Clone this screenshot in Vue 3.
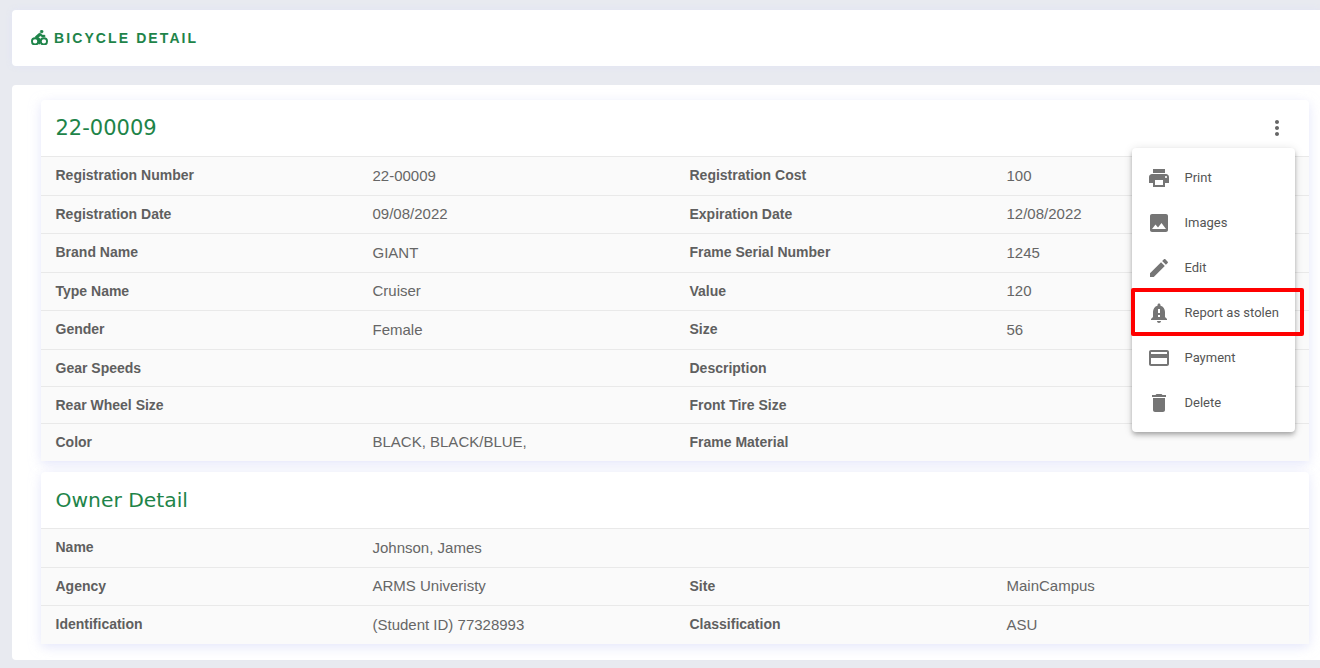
<script setup>
const bikeRows = [
  [['Registration Number', '22-00009'], ['Registration Cost', '100']],
  [['Registration Date', '09/08/2022'], ['Expiration Date', '12/08/2022']],
  [['Brand Name', 'GIANT'], ['Frame Serial Number', '1245']],
  [['Type Name', 'Cruiser'], ['Value', '120']],
  [['Gender', 'Female'], ['Size', '56']],
  [['Gear Speeds', ''], ['Description', '']],
  [['Rear Wheel Size', ''], ['Front Tire Size', '']],
  [['Color', 'BLACK, BLACK/BLUE,'], ['Frame Material', '']],
]
const ownerRows = [
  [['Name', 'Johnson, James'], ['', '']],
  [['Agency', 'ARMS Univeristy'], ['Site', 'MainCampus']],
  [['Identification', '(Student ID) 77328993'], ['Classification', 'ASU']],
]
const menu = [
  { label: 'Print', d: 'M19 8H5c-1.66 0-3 1.34-3 3v6h4v4h12v-4h4v-6c0-1.66-1.34-3-3-3zm-3 11H8v-5h8v5zm3-7c-.55 0-1-.45-1-1s.45-1 1-1 1 .45 1 1-.45 1-1 1zm-1-9H6v4h12V3z' },
  { label: 'Images', d: 'M21 19V5c0-1.1-.9-2-2-2H5c-1.1 0-2 .9-2 2v14c0 1.1.9 2 2 2h14c1.1 0 2-.9 2-2zM8.5 13.5l2.5 3.01L14.5 12l4.5 6H5l3.5-4.5z' },
  { label: 'Edit', d: 'M3 17.25V21h3.75L17.81 9.94l-3.75-3.75L3 17.25zM20.71 7.04c.39-.39.39-1.02 0-1.41l-2.34-2.34c-.39-.39-1.02-.39-1.41 0l-1.83 1.83 3.75 3.75 1.83-1.83z' },
  { label: 'Report as stolen', d: 'M18 16v-5c0-3.07-1.64-5.64-4.5-6.32V4c0-.83-.67-1.5-1.5-1.5s-1.5.67-1.5 1.5v.68C7.63 5.36 6 7.93 6 11v5l-2 2v1h16v-1l-2-2zm-5 0h-2v-2h2v2zm0-4h-2V8h2v4zm-1 10c1.1 0 2-.9 2-2h-4c0 1.1.9 2 2 2z' },
  { label: 'Payment', d: 'M20 4H4c-1.11 0-1.99.89-1.99 2L2 18c0 1.11.89 2 2 2h16c1.11 0 2-.89 2-2V6c0-1.11-.89-2-2-2zm0 14H4v-6h16v6zm0-10H4V6h16v2z' },
  { label: 'Delete', d: 'M6 19c0 1.1.9 2 2 2h8c1.1 0 2-.9 2-2V7H6v12zM19 4h-3.5l-1-1h-5l-1 1H5v2h14V4z' },
]
</script>

<template>
  <div class="page">
    <header class="bar">
      <svg class="bike" viewBox="0 0 540 490" aria-hidden="true">
        <path class="rider" transform="translate(-60 0)" d="M400 96a48 48 0 1 0-48-48 48 48 0 0 0 48 48zm-4 121a31.9 31.9 0 0 0 20 7h64a32 32 0 0 0 0-64h-52.78L356 103a31.94 31.94 0 0 0-40.81.68l-112 96a32 32 0 0 0 3.08 50.92L288 305.12V416a32 32 0 0 0 64 0V288a32 32 0 0 0-14.25-26.62l-41.36-27.57 58.25-49.92z" />
        <circle class="wheel" cx="130" cy="360" r="100" />
        <circle class="wheel" cx="410" cy="360" r="100" />
      </svg>
      <span class="bar-title">BICYCLE DETAIL</span>
    </header>

    <main class="panel">
      <section class="card">
        <div class="card-head">
          <h2 class="num">22-00009</h2>
          <svg class="more" viewBox="0 0 24 24" aria-hidden="true">
            <path d="M12 8c1.1 0 2-.9 2-2s-.9-2-2-2-2 .9-2 2 .9 2 2 2zm0 2c-1.1 0-2 .9-2 2s.9 2 2 2 2-.9 2-2-.9-2-2-2zm0 6c-1.1 0-2 .9-2 2s.9 2 2 2 2-.9 2-2-.9-2-2-2z" />
          </svg>
        </div>
        <div v-for="(row, i) in bikeRows" :key="i" class="row">
          <template v-for="(cell, j) in row" :key="j">
            <div class="label">{{ cell[0] }}</div>
            <div class="value">{{ cell[1] }}</div>
          </template>
        </div>

        <div class="menu">
          <div v-for="item in menu" :key="item.label" class="menu-item">
            <svg class="menu-icon" viewBox="0 0 24 24" aria-hidden="true"><path :d="item.d" /></svg>
            <span>{{ item.label }}</span>
          </div>
          <div class="highlight"></div>
        </div>
      </section>

      <section class="card">
        <div class="card-head">
          <h2>Owner Detail</h2>
        </div>
        <div v-for="(row, i) in ownerRows" :key="i" class="row">
          <template v-for="(cell, j) in row" :key="j">
            <div class="label">{{ cell[0] }}</div>
            <div class="value">{{ cell[1] }}</div>
          </template>
        </div>
      </section>
    </main>
  </div>
</template>

<style scoped>
.page {
  height: 668px;
  overflow: hidden;
  box-sizing: border-box;
  padding: 10px 0 0 12px;
  font-family: "Liberation Sans", Arial, sans-serif;
}
.bar {
  height: 56px;
  background: #fff;
  border-radius: 4px 0 0 4px;
  box-shadow: 0 0 6px rgba(225, 228, 245, 0.9);
  display: flex;
  align-items: center;
  padding-left: 19px;
  gap: 6px;
}
.bike {
  width: 17px;
  height: 15.5px;
  margin-top: -1px;
}
.rider {
  fill: #1e8449;
  stroke: #1e8449;
  stroke-width: 14;
}
.wheel {
  fill: none;
  stroke: #1e8449;
  stroke-width: 60;
}
.bar-title {
  color: #1e8449;
  font-size: 14px;
  font-weight: 700;
  letter-spacing: 2.1px;
  margin-top: -1px;
}
.panel {
  margin-top: 19px;
  height: 575px;
  box-sizing: border-box;
  background: #fff;
  border-radius: 4px 0 0 4px;
  padding: 15px 11px 0 29px;
  display: flex;
  flex-direction: column;
  gap: 11px;
}
.card {
  position: relative;
  background: #fff;
  border-radius: 4px;
  box-shadow: 0 3px 12px rgba(205, 210, 245, 0.55);
}
.card-head {
  height: 56px;
  display: flex;
  align-items: center;
  justify-content: space-between;
  padding: 0 20.5px 0 14.5px;
  border-bottom: 1px solid #e9e9e9;
}
.card-head h2 {
  margin: 0;
  color: #1e8449;
  font-family: "DejaVu Sans", sans-serif;
  font-size: 20.3px;
  font-weight: 400;
}
.card-head h2.num {
  font-size: 21px;
}
.more {
  width: 24px;
  height: 24px;
  fill: #666;
}
.row {
  display: grid;
  grid-template-columns: repeat(4, 1fr);
  align-items: start;
  background: #fafafa;
}
.row + .row {
  border-top: 1px solid #e9e9e9;
}
.label,
.value {
  color: #5f5f5f;
}
.label {
  padding: 8px 14.5px;
  font-size: 14px;
  line-height: 20px;
  font-weight: 700;
}
.value {
  padding: 7.5px 14.5px 8.5px;
  font-size: 15px;
  line-height: 21.5px;
  color: #666;
}
.menu {
  position: absolute;
  top: 48px;
  right: 14px;
  width: 163px;
  box-sizing: border-box;
  padding: 7px 0;
  background: #fff;
  border-radius: 4px;
  box-shadow: 0 2px 4px -1px rgba(0, 0, 0, 0.2), 0 4px 5px rgba(0, 0, 0, 0.14), 0 1px 10px rgba(0, 0, 0, 0.12);
}
.menu-item {
  height: 45px;
  display: flex;
  align-items: center;
  padding-left: 15px;
  gap: 14px;
  font-family: Roboto, sans-serif;
  font-size: 13px;
  color: #555;
}
.menu-icon {
  width: 24px;
  height: 24px;
  fill: #757575;
  margin-left: -0.5px;
}
.highlight {
  position: absolute;
  left: -1px;
  top: 140px;
  width: 173px;
  height: 48px;
  box-sizing: border-box;
  border: 4px solid #f00;
  border-radius: 2px;
}
</style>

<style>
body {
  background: #e8eaf0;
  overflow: hidden;
}
</style>
